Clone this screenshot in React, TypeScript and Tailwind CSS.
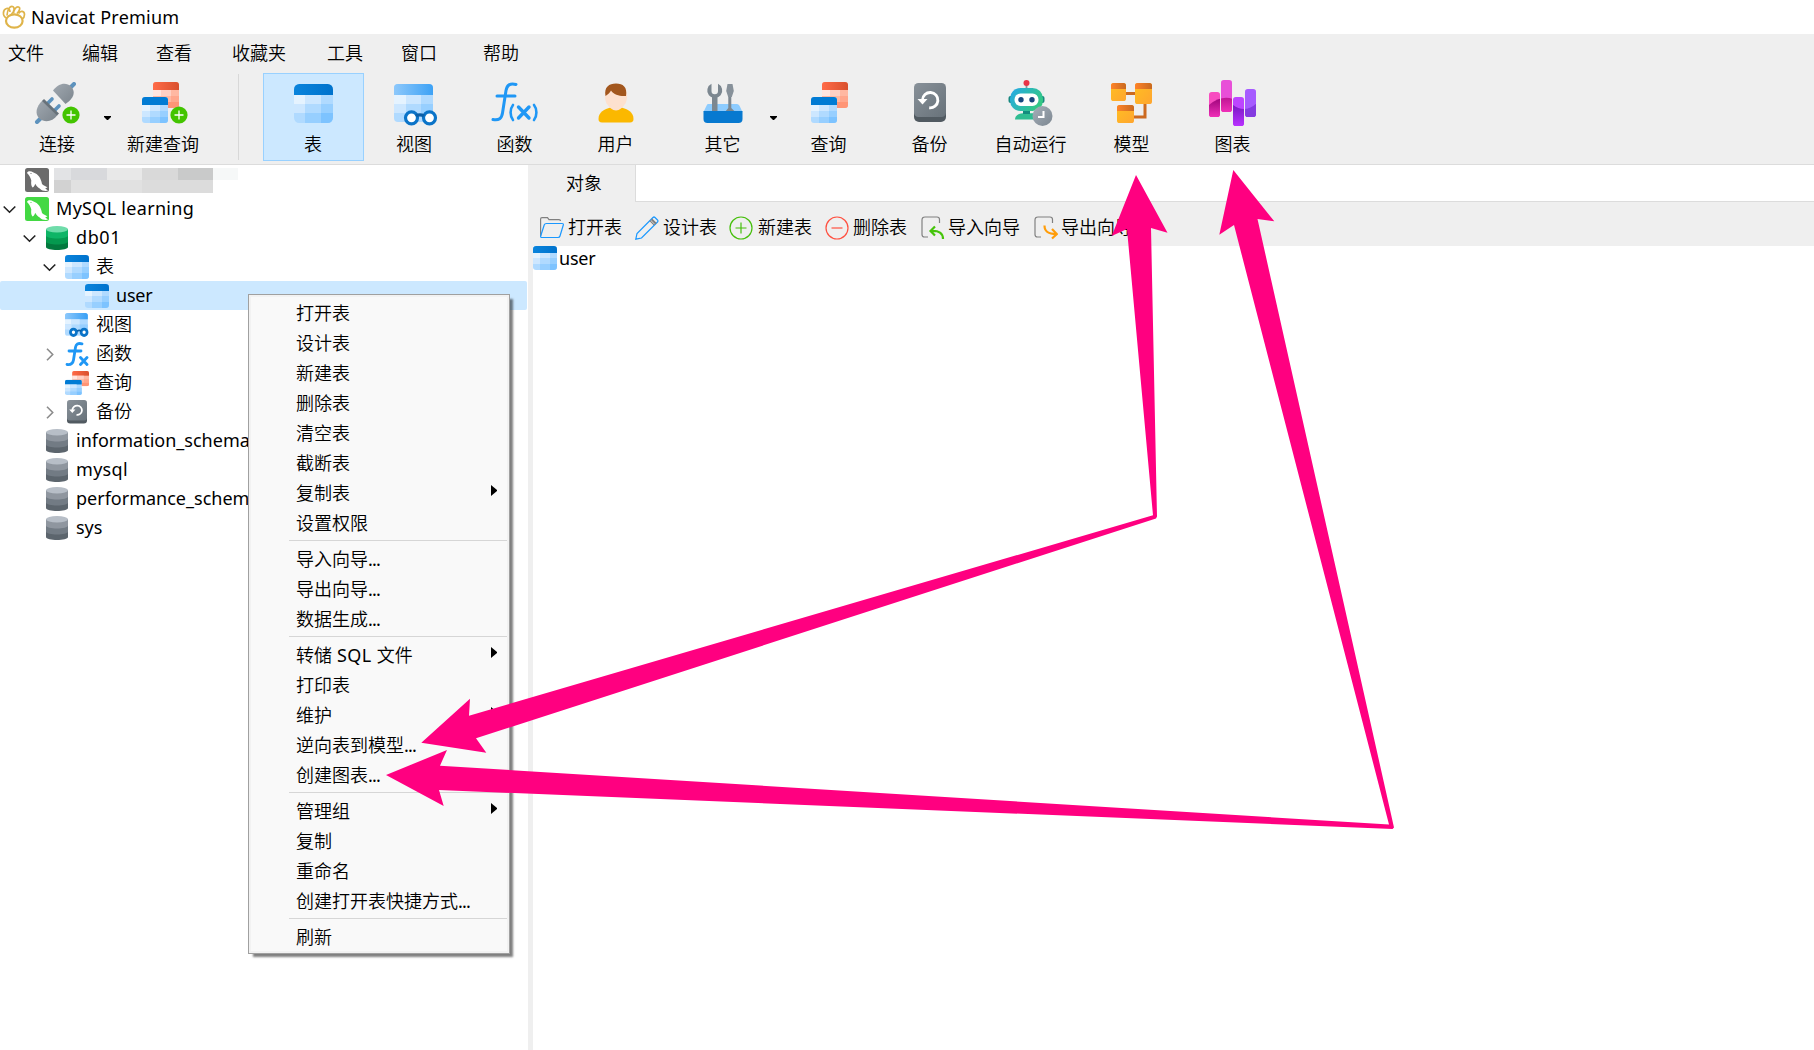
import React from "react";

type P = { className?: string };

const TableIcon = ({ className = "" }: P) => (
  <svg viewBox="0 0 24 24" className={"shrink-0 " + className}>
    <defs>
      <clipPath id="tc"><rect width="24" height="24" rx="3.2" /></clipPath>
      <linearGradient id="tb" x1="0" y1="0" x2="1" y2="0"><stop offset="0" stopColor="#0a84dc" /><stop offset="1" stopColor="#0072cc" /></linearGradient>
    </defs>
    <g clipPath="url(#tc)" shapeRendering="crispEdges">
      <rect width="24" height="24" fill="#b0daff" />
      <rect width="24" height="6.5" fill="url(#tb)" />
      <rect y="6.5" width="7" height="5.6" fill="#e5f3ff" />
      <rect x="7" y="6.5" width="9.6" height="5.6" fill="#cde7ff" />
      <rect y="12.1" width="7" height="6" fill="#cde7ff" />
      <rect x="7" y="18.1" width="9.6" height="5.9" fill="#97cfff" />
      <rect x="16.6" y="12.1" width="7.4" height="6" fill="#97cfff" />
      <rect x="16.6" y="18.1" width="7.4" height="5.9" fill="#7dc3ff" />
    </g>
  </svg>
);

const QueryIcon = ({ className = "", box = "0 0 46 42", children }: P & { box?: string; children?: React.ReactNode }) => (
  <svg viewBox={box} overflow="visible" preserveAspectRatio="none" className={"shrink-0 " + className}>
    <defs>
      <clipPath id="q1"><rect x="11" y="0" width="26" height="26" rx="3" /></clipPath>
      <clipPath id="q2"><rect x="0" y="15" width="26" height="26" rx="3" /></clipPath>
      <linearGradient id="qr"><stop offset="0" stopColor="#ff6b48" /><stop offset="1" stopColor="#d9502d" /></linearGradient>
    </defs>
    <g clipPath="url(#q1)">
      <rect x="11" width="26" height="26" fill="#ffb8a2" />
      <rect x="11" width="26" height="8" fill="url(#qr)" />
      <rect x="11" y="8" width="8" height="6" fill="#ffe6e0" />
      <rect x="19" y="8" width="10" height="6" fill="#ffd0c4" />
      <rect x="29" y="14" width="8" height="6" fill="#ffa78d" />
      <rect x="26" y="20" width="11" height="6" fill="#ff9576" />
    </g>
    <g clipPath="url(#q2)">
      <rect y="15" width="26" height="26" fill="#b0daff" />
      <rect y="15" width="26" height="8" fill="#007bd4" />
      <rect y="23" width="8" height="6" fill="#e5f3ff" />
      <rect x="8" y="23" width="10" height="6" fill="#cde7ff" />
      <rect y="29" width="8" height="6" fill="#cde7ff" />
      <rect x="18" y="29" width="8" height="6" fill="#97cfff" />
      <rect x="8" y="35" width="10" height="6" fill="#97cfff" />
      <rect x="18" y="35" width="8" height="6" fill="#7dc3ff" />
    </g>
    {children}
  </svg>
);

const PlusBadge = ({ x, y }: { x: number; y: number }) => (
  <g>
    <circle cx={x} cy={y} r="8.6" fill="#43c400" />
    <path d={`M${x - 4.5} ${y}h9M${x} ${y - 4.5}v9`} stroke="#fff" strokeWidth="1.3" />
  </g>
);

const PlugIcon = () => (
  <svg viewBox="0 0 46 42" className="h-[42px] w-[46px]">
    <defs><linearGradient id="pg" x1="0" y1="0" x2="1" y2="1"><stop offset="0" stopColor="#a0a8b0" /><stop offset="1" stopColor="#7c858d" /></linearGradient></defs>
    <g strokeLinecap="round" stroke="#5d92bd" strokeWidth="4" fill="none">
      <path d="M36 6 40 2M3 40l4-4" />
      <path d="M14 21l4-4M21 28l4-4" strokeWidth="3.6" />
    </g>
    <path d="M19 8.5C24 1.500 32-.5 37 4.500c5 5 3 12-5.500 17.500z" fill="url(#pg)" />
    <path d="M8.500 18.500 23.500 33c-5 7-13 8-18 3.500C.5 32 2 24.500 8.500 18.500z" fill="url(#pg)" />
    <path d="M8 19l2-2L25 31.500l-2 2z" fill="#68727a" />
    <PlusBadge x={37} y={33} />
  </svg>
);

const ViewIcon = ({ className = "", small }: P & { small?: boolean }) => (
  <svg viewBox="0 0 44 42" className={"shrink-0 " + className} preserveAspectRatio="none">
    <defs>
      <clipPath id="vc"><rect width="39" height="38" rx="4" /></clipPath>
      <clipPath id="vs"><rect width="42" height="40" rx="5" /></clipPath>
      <linearGradient id="vb"><stop offset="0" stopColor="#8dc8fb" /><stop offset="1" stopColor="#379ff5" /></linearGradient>
    </defs>
    <g clipPath={small ? "url(#vs)" : "url(#vc)"}>
      <rect width="42" height="40" fill="#b0daff" />
      <rect width="42" height="11" fill="url(#vb)" />
      <rect y="11" width="12" height="9" fill="#e5f3ff" />
      <rect x="12" y="11" width="15" height="9" fill="#cde7ff" />
      <rect y="20" width="12" height="9" fill="#cde7ff" />
      <rect x="27" y="20" width="15" height="9" fill="#97cfff" />
    </g>
    <circle cx={small ? 15.5 : 17.5} cy="33.800" r={small ? 5.5 : 6} fill="#fff" stroke="#0b74c8" strokeWidth={small ? 5 : 3.2} />
    <circle cx={small ? 35 : 35.5} cy="33.800" r={small ? 5.5 : 6} fill="#fff" stroke="#0b74c8" strokeWidth={small ? 5 : 3.2} />
    <path d="M22 32c2-1.500 6-1.500 8 0" stroke="#0a5fa8" strokeWidth="3.200" fill="none" />
  </svg>
);

const FnIcon = () => (
  <svg viewBox="0 0 48 42" className="h-[42px] w-[48px]" fill="none" stroke="#1f97f5" strokeWidth="3" strokeLinecap="round" strokeLinejoin="round">
    <path d="M25 2.500c-6-1.500-9 .5-10 6L11.500 31c-.8 5.500-3.500 7.500-9.500 6.500M6 14h18" />
    <path d="M22 23c-3.200 4-3.200 11 0 15M43 23c3.200 4 3.200 11 0 15" strokeWidth="2.600" />
    <path d="M27.500 25 38 36M38 25 27.500 36" strokeWidth="3.400" />
  </svg>
);

const SmallFnIcon = () => (
  <svg viewBox="0 0 24 24" className="h-6 w-6" fill="none" stroke="#1f97f5" strokeWidth="2.800" strokeLinecap="round">
    <path d="M17 1.800c-4-1-6 .4-6.500 3.500L8.500 18c-.6 3.500-2.600 5-6.500 4.500M4 9h12" />
    <path d="M15.500 15.500l6.500 7M22 15.500l-6.500 7" />
  </svg>
);

const UserIcon = () => (
  <svg viewBox="0 0 36 40" className="h-10 w-9">
    <path d="M.5 36c0-7 6-10 12-11.500h11c6 1.500 12 4.500 12 11.500 0 2-1 3.500-3.500 3.500H4C1.500 39.500.5 38 .5 36z" fill="#fbb800" />
    <path d="M7 13C7 4 11 1 18 1s11 3 11 12c0 6-2 9-6 12.500-3 2.600-7 2.600-10 0C9 22 7 19 7 13z" fill="#fde1cf" />
    <path d="M7.500 13C6 4 11 .5 18 .5S29.500 4 28 13c-6 .5-12-1-15-5.500-1 2-3 4-5.500 5.500z" fill="#a2571e" />
  </svg>
);

const ToolsIcon = () => (
  <svg viewBox="0 0 40 40" className="h-10 w-10">
    <path d="M5 21h29q1.500 0 2.500 1.800L39.500 29H.5l3-6.200Q4 21 5 21z" fill="#8dccff" />
    <path d="M8.500 .8A7.500 7.500 0 1 0 15 .8V8a3.200 3.200 0 0 1-6.500 0z" fill="#7c8790" />
    <path d="M9 13h5.500v16H9zM25.300 13h3v12l4 4H22l3.300-4z" fill="#7c8790" />
    <path d="M24.500 1h5l1.300 7-2 6h-3.600l-2-6z" fill="#87919a" />
    <path d="M.5 28h39v8q0 4-4 4H4.500q-4 0-4-4z" fill="#0779d0" />
  </svg>
);

const BackupIcon = ({ className = "" }: P) => (
  <svg viewBox="0 0 32 40" className={"shrink-0 " + className} preserveAspectRatio="none">
    <defs><linearGradient id="bk" x1="0" y1="0" x2="1" y2="1"><stop offset="0" stopColor="#889199" /><stop offset="1" stopColor="#68727a" /></linearGradient></defs>
    <rect y="5" width="32" height="34" rx="5" fill="#515a61" />
    <rect width="32" height="34" rx="4.500" fill="url(#bk)" />
    <path d="M8.500 17a7.700 7.700 0 1 1 6.700 7.800" fill="none" stroke="#fff" strokeWidth="2.900" />
    <path d="M3.500 16h10l-5 5.500z" fill="#fff" />
  </svg>
);

const RobotIcon = () => (
  <svg viewBox="0 0 46 47" className="h-[47px] w-[46px]">
    <defs>
      <linearGradient id="rb" x1="0" y1="0" x2="1" y2=".5"><stop offset="0" stopColor="#24a8ea" /><stop offset="1" stopColor="#34c884" /></linearGradient>
      <linearGradient id="ck" x1="0" y1="0" x2="1" y2="1"><stop offset="0" stopColor="#a5afb9" /><stop offset="1" stopColor="#7d8791" /></linearGradient>
    </defs>
    <path d="M18.500 4v6" stroke="#8a9299" strokeWidth="1.800" />
    <circle cx="18.500" cy="3" r="3" fill="#e93347" />
    <rect x=".5" y="16" width="36" height="7" rx="2" fill="#16887f" />
    <path d="M7 39.500c0-4 4-6.300 8-6.300h12v6.300z" fill="#2fbd92" />
    <rect x="15" y="30" width="7" height="4" fill="#138c7f" />
    <rect x="2" y="8" width="33" height="23" rx="10.500" fill="url(#rb)" />
    <rect x="6.500" y="13.500" width="24" height="12.500" rx="6" fill="#fff" />
    <circle cx="13" cy="19.700" r="2.700" fill="#17477e" /><circle cx="24" cy="19.700" r="2.700" fill="#17477e" />
    <circle cx="34.500" cy="36" r="10" fill="url(#ck)" />
    <path d="M35.500 31v6h-5.500" fill="none" stroke="#fff" strokeWidth="2" />
  </svg>
);

const ModelIcon = () => (
  <svg viewBox="0 0 42 41" className="h-[41px] w-[42px]">
    <defs>
      <linearGradient id="mo"><stop offset="0" stopColor="#ff8329" /><stop offset="1" stopColor="#c86920" /></linearGradient>
      <linearGradient id="my" x1="0" y1="0" x2="1" y2="1"><stop offset="0" stopColor="#ffbf22" /><stop offset="1" stopColor="#ffa52f" /></linearGradient>
    </defs>
    <path d="M14 10.500h12M34 20v14H22" stroke="#cc6a20" strokeWidth="3" fill="none" />
    {[[0, 0, 15, 18], [24, 0, 17, 21], [6, 22, 17, 18]].map(([x, y, w, h]) => (
      <g key={x}>
        <rect x={x} y={y} width={w} height={h} rx="2.600" fill="url(#my)" />
        <path d={`M${x} ${y + 6}V${y + 2.5}q0-2.500 2.500-2.500h${w - 5}q2.500 0 2.500 2.500V${y + 6}z`} fill="url(#mo)" />
      </g>
    ))}
  </svg>
);

const ChartIcon = () => (
  <svg viewBox="0 0 48 46" className="h-[46px] w-12">
    <defs>
      <linearGradient id="c1" x1="0" y1="0" x2="0" y2="1"><stop offset="0.300" stopColor="#a3077f" /><stop offset="1" stopColor="#f030b8" /></linearGradient>
      <linearGradient id="c2" x1="0" y1="0" x2="0" y2="1"><stop offset="0.300" stopColor="#7a1bc4" /><stop offset="1" stopColor="#b931ff" /></linearGradient>
      <clipPath id="k1"><path d="M0 25Q12 15 24 19V46H0z" /></clipPath>
      <clipPath id="k2"><path d="M24 25q12 9 24-2v23H24z" /></clipPath>
    </defs>
    <rect y="12" width="11" height="25" rx="2.800" fill="#f84cc0" />
    <rect x="12" width="11" height="32" rx="2.800" fill="#e84fd8" />
    <rect x="24" y="17" width="11" height="29" rx="2.800" fill="#bd45ff" />
    <rect x="36" y="9" width="11" height="28" rx="2.800" fill="#a65bff" />
    <g clipPath="url(#k1)"><rect y="12" width="11" height="25" rx="2.800" fill="url(#c1)" /><rect x="12" width="11" height="32" rx="2.800" fill="url(#c1)" /></g>
    <g clipPath="url(#k2)"><rect x="24" y="17" width="11" height="29" rx="2.800" fill="url(#c2)" /><rect x="36" y="9" width="11" height="28" rx="2.800" fill="#843be0" /></g>
  </svg>
);

const DbIcon = ({ on }: { on?: boolean }) => {
  const c = on ? ["#6fdcaa", "#0eb566", "#05994f", "#03793e"] : ["#b7bec7", "#8f969f", "#727b84", "#5c656d"];
  return (
    <svg viewBox="0 0 22 24" className="h-6 w-[22px]">
      <path d="M0 15v6c0 4 22 4 22 0v-6z" fill={c[3]} />
      <path d="M0 9v6.500c0 4 22 4 22 0V9z" fill={c[2]} />
      <path d="M0 3v6.500c0 4 22 4 22 0V3z" fill={c[1]} />
      <ellipse cx="11" cy="3.200" rx="11" ry="3.200" fill={c[0]} />
    </svg>
  );
};

const DolphinIcon = ({ on }: { on?: boolean }) => (
  <svg viewBox="0 0 24 24" className="h-6 w-6">
    <rect width="24" height="24" rx="2.500" fill={on ? "#43d843" : "#6b6b6b"} />
    <path d="M2 5C2.500 3 5.500 2.600 8.500 4.500c4.500 1.500 7.500 5.500 8.500 11.500 1.300 1.300 3.500 2 5.500 3.500l-2.300.8 2.800 2.500c-3 .4-6 .2-8.300-2.300-1.700-1-3-2.300-4.500-4.800-.5 2-1.200 3-2.700 3.800C6 17.500 6 15 6.300 12.500 5.500 9 4 7 2 5z" fill="#fff" />
    <circle cx="6" cy="5.500" r=".6" fill={on ? "#43d843" : "#6b6b6b"} />
  </svg>
);

const Logo = () => (
  <svg viewBox="0 0 24 24" className="h-6 w-6" fill="none" stroke="#dfb44a">
    <ellipse cx="12.300" cy="16" rx="8.300" ry="6.700" strokeWidth="2.200" />
    <path d="M4.500 13C0 11 .8 4.500 4.500 3.500c2-.5 3.500 1 3.500 3.500M5 10.500C5.500 4 8 1 10.500 1.500c2.500.8 2 5-1 7.500M11.500 8.500c0-3.500 2.500-7 5-6.500 2.300.6 1 4-1.500 6.500M16.500 8.500C18.500 5 22.500 6 22.500 9.500c0 2-.8 3.500-2.300 4.500" strokeWidth="1.700" />
  </svg>
);

const Caret = ({ className = "" }: P) => (
  <svg viewBox="0 0 7 4" className={"h-1 w-[7px] " + className}><path d="M0 0h7v1L4 4H3L0 1z" /></svg>
);

const Tool = ({ w, label, icon, active, arrow }: { w: string; label: string; icon: React.ReactNode; active?: boolean; arrow?: string }) => (
  <div className={`relative flex h-[88px] shrink-0 flex-col items-center ${w} ${active ? "border border-[#99d1ff] bg-[#cce8ff]" : "border border-transparent"}`}>
    <div className="flex h-[58px] items-center justify-center">{icon}</div>
    <div className="-mt-px h-[26px] whitespace-nowrap leading-[26px]">{label}</div>
    {arrow && <Caret className={`absolute top-[42px] ${arrow}`} />}
  </div>
);

const Chevron = ({ open }: { open?: boolean }) => (
  <svg viewBox="0 0 14 14" className="h-3.5 w-3.5" fill="none" stroke={open ? "#222" : "#8c8c8c"} strokeWidth="1.600">
    <path d={open ? "M.7 4.500 6.500 10.200 12.300 4.500" : "M4 1.700 9.700 7.500 4 13.300"} />
  </svg>
);

const Row = ({ indent, chev, icon, label, sel, track = "" }: { indent: string; chev?: "open" | "closed"; icon: React.ReactNode; label: string; sel?: boolean; track?: string }) => (
  <div className={`flex h-[29px] w-[527px] items-center rounded-[2px] ${indent} ${sel ? "bg-[#cce8ff]" : ""}`}>
    <div className="w-[22px] shrink-0">{chev && <Chevron open={chev === "open"} />}</div>
    <div className="flex w-6 shrink-0 justify-center">{icon}</div>
    <span className={`ml-[7px] whitespace-nowrap ${track}`}>{label}</span>
  </div>
);

type Item = { t: React.ReactNode; sub?: boolean; dots?: boolean } | null;

const menu: Item[] = [
  { t: "打开表" }, { t: "设计表" }, { t: "新建表" }, { t: "删除表" }, { t: "清空表" }, { t: "截断表" },
  { t: "复制表", sub: true }, { t: "设置权限" }, null,
  { t: "导入向导", dots: true }, { t: "导出向导", dots: true }, { t: "数据生成", dots: true }, null,
  { t: <>转储<span className="font-normal tracking-[0.4px]"> SQL </span>文件</>, sub: true }, { t: "打印表" }, { t: "维护", sub: true },
  { t: "逆向表到模型", dots: true }, { t: "创建图表", dots: true }, null,
  { t: "管理组", sub: true }, { t: "复制" }, { t: "重命名" }, { t: "创建打开表快捷方式", dots: true }, null,
  { t: "刷新" },
];

const Act = ({ icon, label, w }: { icon: React.ReactNode; label: string; w: string }) => (
  <div className={`flex h-full shrink-0 items-center ${w}`}>
    {icon}
    <span className="whitespace-nowrap">{label}</span>
  </div>
);

const ico = "h-6 w-6 shrink-0";

export default function App() {
  return (
    <div className="relative flex h-[1050px] w-[1814px] flex-col overflow-hidden bg-white font-['Noto_Sans','Noto_Sans_CJK_SC',sans-serif] text-[18px] font-[350] text-black">
      <div className="flex h-[34px] items-center pl-0.5">
        <Logo />
        <span className="ml-[5px] font-normal tracking-[0.22px]">Navicat Premium</span>
      </div>
      <div className="flex h-[39px] items-center bg-[#efefef] pl-2">
        <span className="w-[74px]">文件</span>
        <span className="w-[74px]">编辑</span>
        <span className="w-[76px]">查看</span>
        <span className="w-[95px]">收藏夹</span>
        <span className="w-[74px]">工具</span>
        <span className="w-[82px]">窗口</span>
        <span>帮助</span>
      </div>
      <div className="flex h-[92px] border-b border-[#dcdcdc] bg-[#efefef]">
        <Tool w="w-[114px]" label="连接" icon={<PlugIcon />} arrow="right-[2px]" />
        <Tool w="w-[98px]" label="新建查询" icon={<QueryIcon className="ml-[3px] h-[42px] w-[46px]"><PlusBadge x={37} y={33} /></QueryIcon>} />
        <div className="ml-[26px] mr-6 mt-px h-[86px] w-px bg-[#d8d8d8]" />
        <Tool w="w-[101px] pr-px" label="表" icon={<TableIcon className="h-[39px] w-[39px]" />} active />
        <Tool w="w-[100px]" label="视图" icon={<ViewIcon className="ml-1 mt-1 h-[42px] w-11" />} />
        <Tool w="w-[101px]" label="函数" icon={<FnIcon />} />
        <Tool w="w-[101px]" label="用户" icon={<UserIcon />} />
        <Tool w="w-[112px] pl-px" label="其它" icon={<ToolsIcon />} arrow="right-0" />
        <Tool w="w-[101px]" label="查询" icon={<QueryIcon className="ml-[10px] h-[42px] w-[46px]" />} />
        <Tool w="w-[101px]" label="备份" icon={<BackupIcon className="h-10 w-8" />} />
        <Tool w="w-[101px]" label="自动运行" icon={<RobotIcon />} />
        <Tool w="w-[101px]" label="模型" icon={<ModelIcon />} />
        <Tool w="w-[101px]" label="图表" icon={<ChartIcon />} />
      </div>
      <div className="flex min-h-0 flex-1">
        <div className="w-[528px] shrink-0 overflow-hidden">
          <div className="flex h-[29px] pl-[25px] pt-[3px]">
            <DolphinIcon />
            <div className="ml-[5px]">
              <div className="flex h-3">
                <div className="w-[17px] bg-[#e2e3e5]" /><div className="w-9 bg-[#d8d9dc]" /><div className="w-[35px] bg-[#e8e8e8]" /><div className="w-9 bg-[#d9d9d9]" /><div className="w-[35px] bg-[#c9caca]" /><div className="w-[25px] bg-[#f6f8f8]" />
              </div>
              <div className="flex h-[13px]">
                <div className="w-[17px] bg-[#d2d2d2]" /><div className="w-[71px] bg-[#e1e1e1]" /><div className="w-[71px] bg-[#dcdcdc]" />
              </div>
            </div>
          </div>
          <Row indent="pl-[3px]" chev="open" icon={<DolphinIcon on />} label="MySQL learning" track="font-normal tracking-[0.3px]" />
          <Row indent="pl-[23px]" chev="open" icon={<DbIcon on />} label="db01" track="font-normal tracking-[0.6px]" />
          <Row indent="pl-[43px]" chev="open" icon={<TableIcon className="h-6 w-6" />} label="表" />
          <Row indent="pl-[63px]" icon={<TableIcon className="h-6 w-6" />} label="user" sel track="font-normal tracking-[-0.2px]" />
          <Row indent="pl-[43px]" icon={<ViewIcon small className="h-6 w-6" />} label="视图" />
          <Row indent="pl-[43px]" chev="closed" icon={<SmallFnIcon />} label="函数" />
          <Row indent="pl-[43px]" icon={<QueryIcon box="0 0 37 41" className="h-6 w-6" />} label="查询" />
          <Row indent="pl-[43px]" chev="closed" icon={<BackupIcon className="h-6 w-5" />} label="备份" />
          <Row indent="pl-[23px]" icon={<DbIcon />} label="information_schema" track="font-normal" />
          <Row indent="pl-[23px]" icon={<DbIcon />} label="mysql" track="font-normal tracking-[0.3px]" />
          <Row indent="pl-[23px]" icon={<DbIcon />} label="performance_schema" track="font-normal" />
          <Row indent="pl-[23px]" icon={<DbIcon />} label="sys" track="font-normal" />
        </div>
        <div className="flex flex-1 flex-col border-l-[5px] border-[#efefef]">
          <div className="flex h-[37px]">
            <div className="flex w-[103px] items-center border-r border-[#dcdcdc] bg-[#efefef] pl-[33px]">对象</div>
            <div className="flex-1 border-b border-[#dcdcdc]" />
          </div>
          <div className="flex h-11 items-center bg-[#efefef] pl-[7px] pt-[7px]">
            <Act w="w-[95px] gap-1" label="打开表" icon={
              <svg viewBox="0 0 24 24" className={ico} fill="none" strokeWidth="1.200">
                <path d="M.6 20V3Q.6 1.600 2 1.600h5.500l1.500 2h10q1.500 0 1.500 1.500" stroke="#808080" />
                <path d="M6.500 7.500h15.500q1.700 0 1.300 1.500l-3.300 11q-.4 1.500-2 1.500H2q-1.700 0-1.300-1.500l3.500-11q.5-1.500 2.300-1.500z" stroke="#1a98ff" />
              </svg>} />
            <Act w="w-[95px] gap-[4px]" label="设计表" icon={
              <svg viewBox="0 0 24 24" className={ico} fill="none" stroke="#1a98ff" strokeWidth="1.200">
                <path d="M.8 23.200 2 17.500 18 1.500q1-1 2 0l2.500 2.500q1 1 0 2L6.500 22z" />
                <path d="m14.800 4.700 4.500 4.500" stroke="#808080" /><path d="m16.500 3.200 4.500 4.500" stroke="#808080" strokeWidth="2" />
              </svg>} />
            <Act w="w-[95px] gap-[5px] -ml-px mr-px" label="新建表" icon={
              <svg viewBox="0 0 24 24" className={ico} fill="none" stroke="#45bf0a" strokeWidth="1.200"><circle cx="12" cy="12" r="11" /><path d="M12 6.500v11M6.500 12h11" /></svg>} />
            <Act w="w-[96px] gap-1" label="删除表" icon={
              <svg viewBox="0 0 24 24" className={ico} fill="none" stroke="#ff5040" strokeWidth="1.200"><circle cx="12" cy="12" r="11" /><path d="M6.500 12h11" /></svg>} />
            <Act w="w-[113px] gap-[3px]" label="导入向导" icon={
              <svg viewBox="0 0 24 24" className={ico} fill="none">
                <path d="M18.500 7V3.500q0-2.500-2.500-2.500H4Q1 1 1 4v14.500q0 2.500 2.500 2.500H7" stroke="#808080" strokeWidth="1.200" />
                <path d="M14 10.500 9.500 15l4.500 4.500M10 15c8-.5 12 2 12 8" stroke="#45c40a" strokeWidth="2.200" />
              </svg>} />
            <Act w="gap-[3px]" label="导出向导" icon={
              <svg viewBox="0 0 24 24" className={ico} fill="none">
                <path d="M18.500 7V3.500q0-2.500-2.500-2.500H4Q1 1 1 4v14.500q0 2.500 2.500 2.500H7" stroke="#808080" strokeWidth="1.200" />
                <path d="M10.500 9.500c0 6.500 4 8.500 12 8.500M18 13l4.800 5-4.800 4.500" stroke="#ff9d0a" strokeWidth="2.200" />
              </svg>} />
          </div>
          <div className="flex h-6 items-center"><TableIcon className="h-6 w-6" /><span className="ml-[2px] font-normal tracking-[-0.2px]">user</span></div>
        </div>
      </div>

      <div className="absolute left-[248px] top-[294px] h-[660px] w-[262px] border border-[#a0a0a0] bg-[#f9f9f9] p-0.5 shadow-[4px_4px_2px_-1px_rgba(0,0,0,0.5)] ring-2 ring-inset ring-[#f2f2f2]">
        {menu.map((m, i) =>
          m === null ? (
            <div key={i} className="flex h-1.5 items-center pl-[38px]"><div className="h-px flex-1 bg-[#d6d6d6]" /></div>
          ) : (
            <div key={i} className="flex h-[30px] items-center justify-between pl-[45px] pr-2.5">
              <span className="whitespace-nowrap pt-0.5">{m.t}{m.dots && <span className="font-normal tracking-[-0.8px]">...</span>}</span>
              {m.sub && <svg viewBox="0 0 6 11" className="mb-1 h-[11px] w-1.5"><path d="M0 0 6 5v1L0 11z" /></svg>}
            </div>
          )
        )}
      </div>

      <svg viewBox="0 0 1814 1050" className="pointer-events-none absolute inset-0 h-full w-full" fill="#ff0080">
        <path d="M1136 175 1167.500 232.700 1151 228 1157 516.500 1156 518.500 476 738.300 486.300 752.700 421.300 742.700 470 698.700 469 715.700 1153 515.300 1127 229 1111.700 236z" />
        <path d="M1233.300 170 1274.300 221.300 1257.500 219 1394 827.500 1392.500 829 439 790 443.700 806 386 775 447 750 440 765.700 1389 824.500 1234 225 1219.300 234.700z" />
      </svg>
    </div>
  );
}
